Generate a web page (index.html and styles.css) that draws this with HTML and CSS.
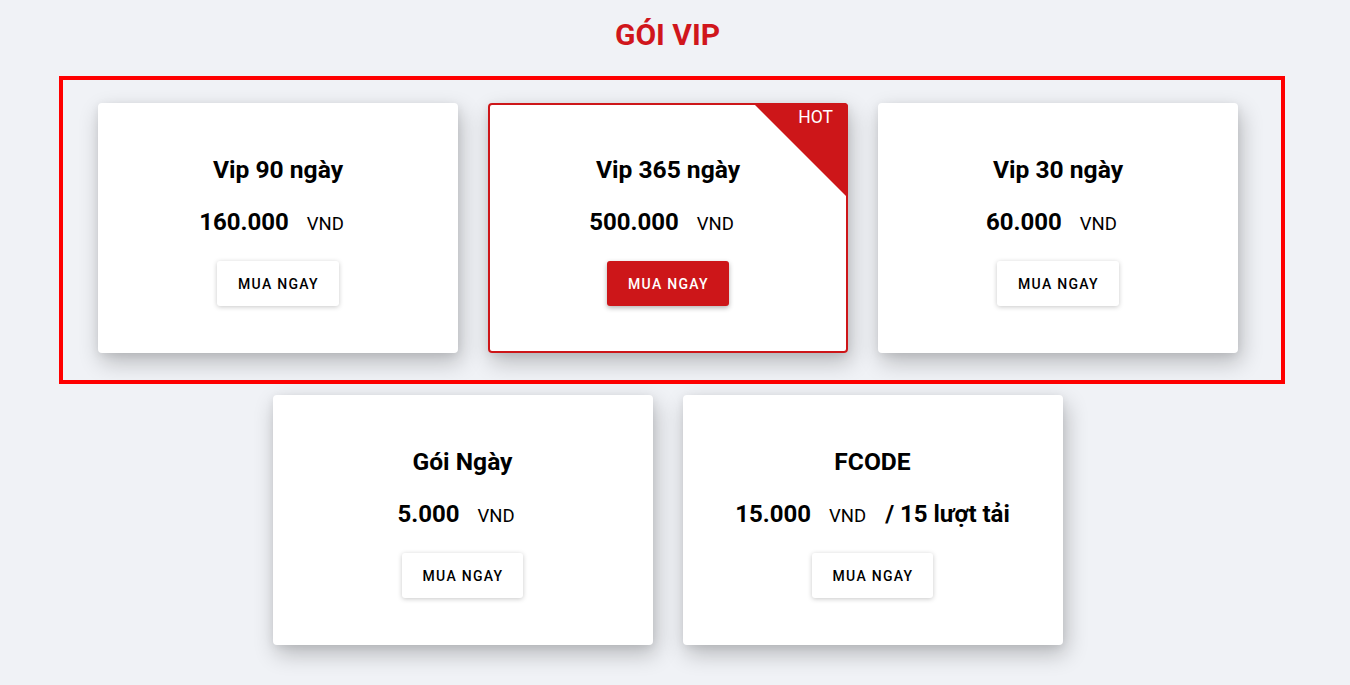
FILE: index.html
```html
<!DOCTYPE html>
<html lang="vi">
<head>
<meta charset="utf-8">
<title>Gói VIP</title>
<link rel="stylesheet" href="styles.css">
</head>
<body>
<div class="page">
  <h2 class="heading">GÓI VIP</h2>
  <div class="highlight">
    <div class="row">
      <div class="card">
        <h3 class="card-title">Vip 90 ngày</h3>
        <div class="price"><span class="amount">160.000</span><span class="unit">VND</span><span class="per empty"></span></div>
        <button class="btn">Mua ngay</button>
      </div>
      <div class="card hot">
        <div class="ribbon"><span class="ribbon-text">HOT</span></div>
        <h3 class="card-title">Vip 365 ngày</h3>
        <div class="price"><span class="amount">500.000</span><span class="unit">VND</span><span class="per empty"></span></div>
        <button class="btn btn-red">Mua ngay</button>
      </div>
      <div class="card">
        <h3 class="card-title">Vip 30 ngày</h3>
        <div class="price"><span class="amount">60.000</span><span class="unit">VND</span><span class="per empty"></span></div>
        <button class="btn">Mua ngay</button>
      </div>
    </div>
  </div>
  <div class="row row-second">
    <div class="card card-wide">
      <h3 class="card-title">Gói Ngày</h3>
      <div class="price"><span class="amount">5.000</span><span class="unit">VND</span><span class="per empty"></span></div>
      <button class="btn">Mua ngay</button>
    </div>
    <div class="card card-wide">
      <h3 class="card-title">FCODE</h3>
      <div class="price"><span class="amount">15.000</span><span class="unit">VND</span><span class="per">/ 15 lượt tải</span></div>
      <button class="btn">Mua ngay</button>
    </div>
  </div>
</div>
</body>
</html>
```

FILE: styles.css
```css
html, body {
  margin: 0;
  padding: 0;
  background: #f0f2f6;
  font-family: Roboto, "Liberation Sans", Arial, sans-serif;
  color: #000;
}

.page {
  width: 1335px;
  padding-top: 17px;
  padding-bottom: 40px;
}

.heading {
  margin: 0;
  text-align: center;
  font-size: 30px;
  line-height: 36px;
  font-weight: 700;
  color: #d0161c;
}

.highlight {
  box-sizing: border-box;
  margin: 23px 0 0 59px;
  width: 1226px;
  border: 4px solid #ff0000;
  padding: 23px 0 27px 35px;
}

.row {
  display: flex;
  gap: 30px;
}

.row-second {
  justify-content: center;
  margin-top: 11px;
}

.card {
  position: relative;
  box-sizing: border-box;
  width: 360px;
  height: 250px;
  background: #fff;
  border-radius: 4px;
  padding-top: 52px;
  text-align: center;
  overflow: hidden;
  box-shadow: 3px 9px 22px rgba(0, 0, 0, 0.24), 0 2px 8px rgba(0, 0, 0, 0.07);
}

.card-wide {
  width: 380px;
}

.card.hot {
  box-shadow: inset 0 0 0 2px #cd1619, 3px 9px 22px rgba(0, 0, 0, 0.24), 0 2px 8px rgba(0, 0, 0, 0.07);
}

.ribbon {
  position: absolute;
  top: 0;
  right: 0;
  width: 95px;
  height: 95px;
  background: #cd1619;
  clip-path: polygon(0 0, 100% 0, 100% 100%);
}

.ribbon-text {
  position: absolute;
  top: 2px;
  right: 15px;
  color: #fff;
  font-size: 17.5px;
  line-height: 24px;
  font-weight: 400;
}

.card-title {
  margin: 0 0 24px;
  font-size: 24.6px;
  line-height: 29px;
  font-weight: 700;
}

.price {
  height: 29px;
  line-height: 29px;
  margin-bottom: 23.5px;
  white-space: nowrap;
}

.amount {
  font-size: 24px;
  font-weight: 700;
}

.unit {
  font-size: 18.5px;
  font-weight: 400;
  margin-left: 18px;
}

.per {
  font-size: 24px;
  font-weight: 700;
  margin-left: 19px;
}

.per.empty {
  margin-left: 13px;
}

.btn {
  box-sizing: border-box;
  height: 45px;
  padding: 1px 20px 0 21px;
  border: 0;
  border-radius: 3px;
  background: #fff;
  color: #000;
  font-family: Roboto, "Liberation Sans", Arial, sans-serif;
  font-size: 14px;
  font-weight: 500;
  letter-spacing: 1.3px;
  text-transform: uppercase;
  box-shadow: 0 1px 5px rgba(0, 0, 0, 0.22);
  cursor: pointer;
}

.btn-red {
  background: #cd1619;
  color: #fff;
  box-shadow: 0 2px 5px rgba(0, 0, 0, 0.3);
}
```
